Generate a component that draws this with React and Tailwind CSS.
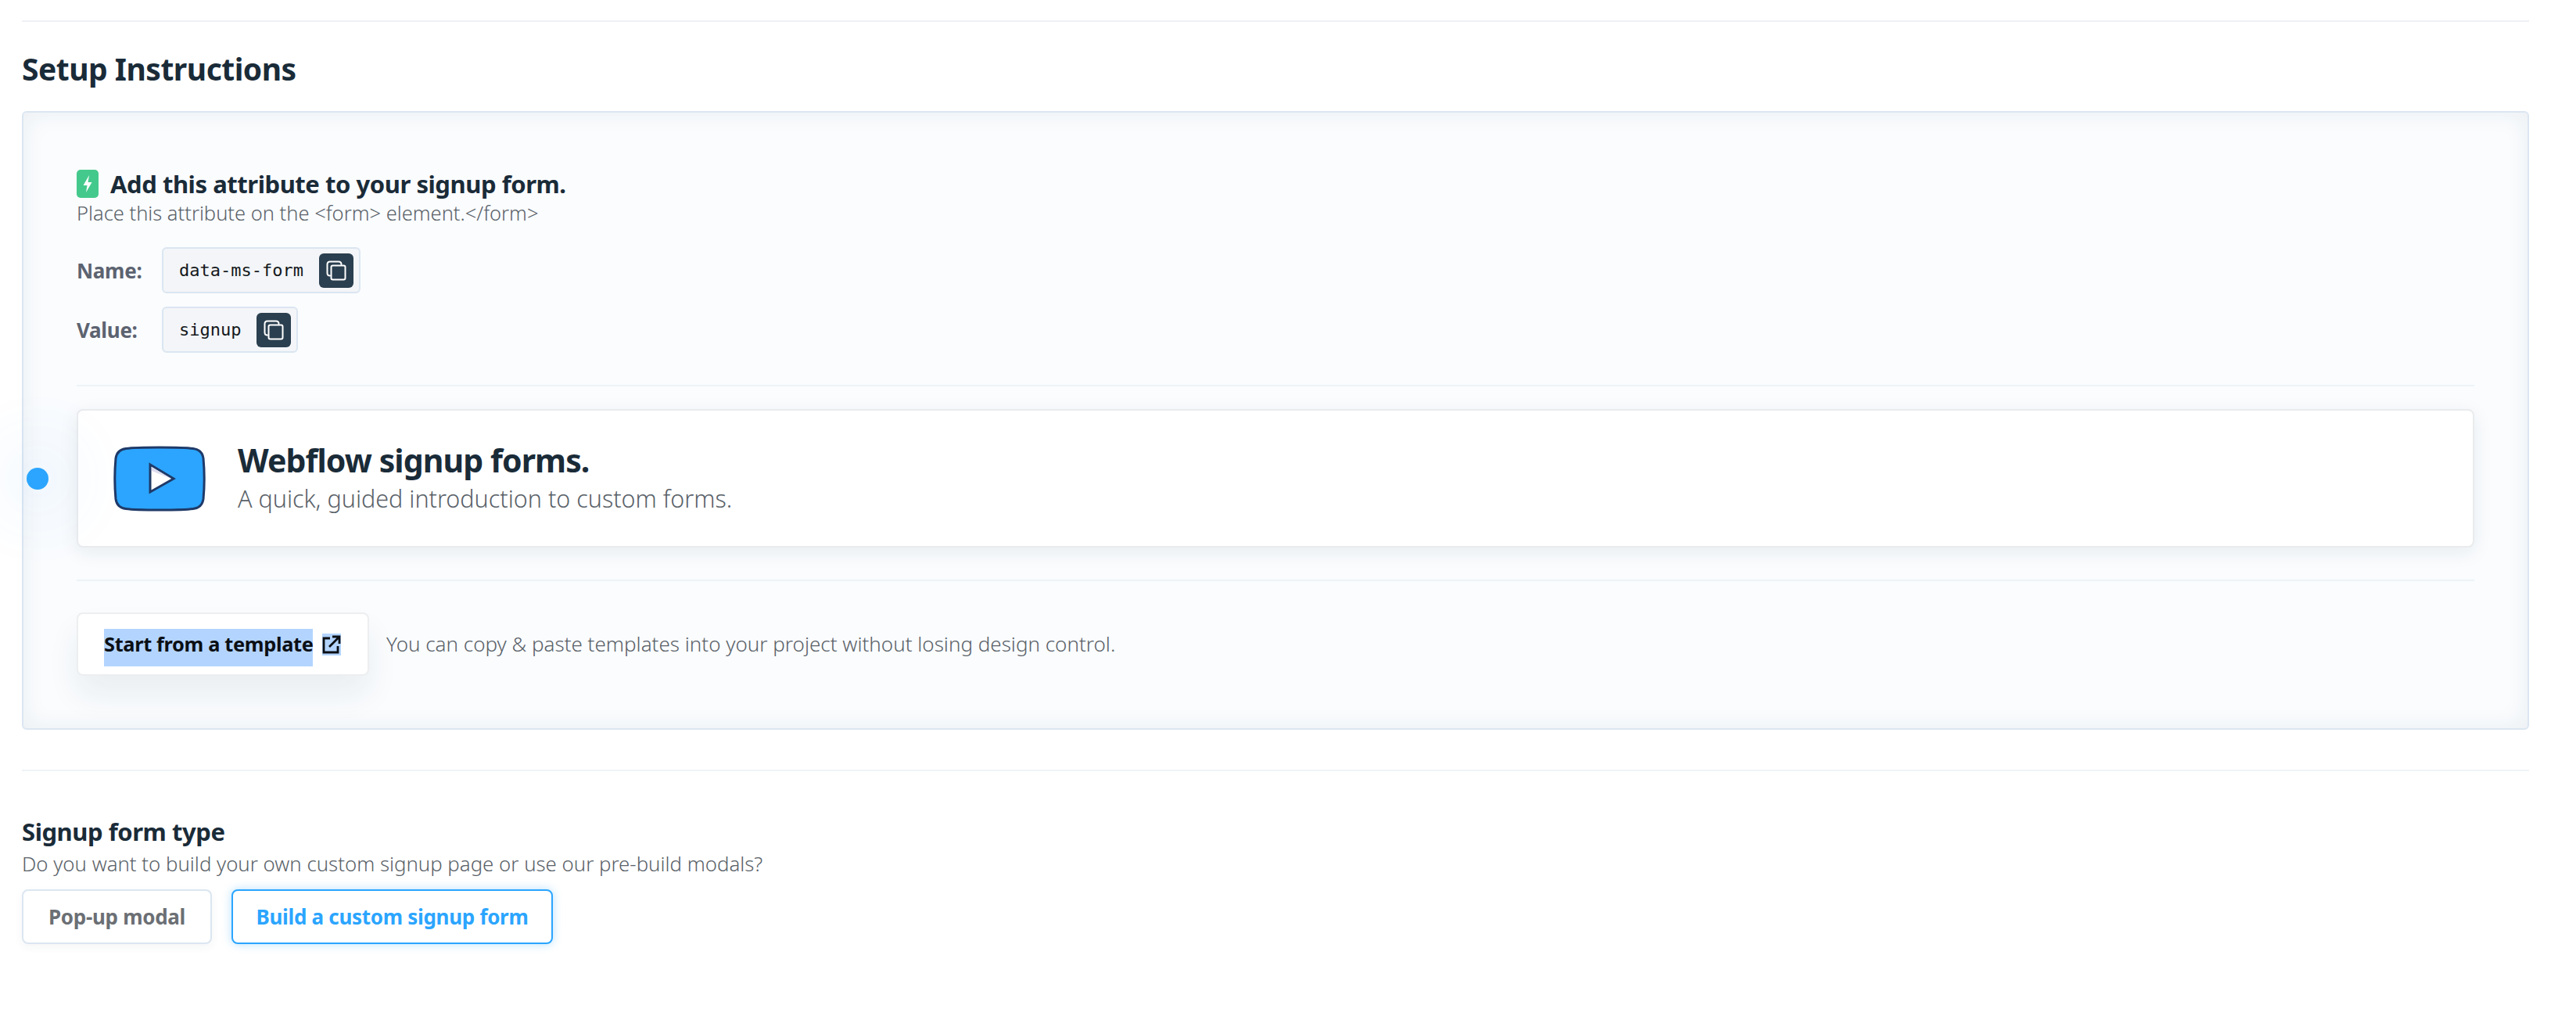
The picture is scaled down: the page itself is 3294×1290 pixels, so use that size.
import React from "react";

const sans = "font-['Noto_Sans',sans-serif]";

const CopyIcon = () => (
  <svg viewBox="0 0 26 26" className="w-[26px] h-[26px]" fill="none" stroke="white" strokeWidth="2">
    <path d="M5 19.500C2.800 19.500 1.500 18.200 1.500 16V5C1.500 2.800 2.800 1.500 5 1.500H16C18.200 1.500 19.500 2.800 19.500 5" strokeLinecap="round" />
    <rect x="6.500" y="6.500" width="18" height="18" rx="2" />
  </svg>
);

const AttributeRow = ({ label, value }) => (
  <div className="flex items-center">
    <span className="w-[109px] text-[26px] leading-none font-bold tracking-[-0.3px] text-[#5c6370]">{label}</span>
    <div className="flex items-center h-[59px] pl-[20px] pr-[7px] gap-[20px] bg-[#f3f5f8] border-2 border-[#dbe6f1] rounded-[6px]">
      <code className="font-['DejaVu_Sans_Mono',monospace] text-[22px] text-[#14181c]">{value}</code>
      <button className="flex items-center justify-center w-[44px] h-[44px] bg-[#2a3f4f] rounded-[6px]">
        <CopyIcon />
      </button>
    </div>
  </div>
);

const PlayLogo = () => (
  <svg viewBox="0 0 118 84" className="w-[118px] h-[84px] shrink-0">
    <path
      d="M59 2C74 2 91 2 102 3.500C110 4.500 114 9 115 16C116.500 32 116.500 52 115 68C114 75 110 79.500 102 80.500C91 82 74 82 59 82C44 82 27 82 16 80.500C8 79.500 4 75 3 68C1.500 52 1.500 32 3 16C4 9 8 4.500 16 3.500C27 2 44 2 59 2Z"
      fill="#2ba5ff"
      stroke="#1f3a68"
      strokeWidth="3"
    />
    <path d="M47 24L77 42L47 59Z" fill="white" stroke="#1f3a68" strokeWidth="3" strokeLinejoin="miter" />
    <path d="M49 27L74 42L49 32Z" fill="#dcdcee" />
  </svg>
);

export default function App() {
  return (
    <div className={`${sans} relative min-h-[1290px] bg-white pl-[28px] pr-[60px] pt-[26px] overflow-hidden`}>
      <div className="h-[2px] bg-[#eef0f7]" />
      <h2 className="mt-[38px] text-[39px] leading-[44px] font-bold tracking-[-0.5px] text-[#1a2b38]">Setup Instructions</h2>

      <div className="mt-[32px] h-[791px] px-[68px] pt-[72px] bg-[#fafcfe] border-2 border-[#dbe6f1] rounded-[6px] shadow-[inset_0_0_30px_rgba(30,50,70,0.07)]">
        <div className="flex items-center gap-[15px]">
          <div className="flex items-center justify-center w-[28px] h-[36px] bg-[#44c98c] rounded-[5px]">
            <svg viewBox="0 0 14 24" className="w-[14px] h-[24px]" fill="white">
              <path d="M9 1L1.500 14H6.500L5 23L12.500 10H7.500Z" />
            </svg>
          </div>
          <h3 className="text-[31px] leading-[38px] font-bold tracking-[-0.45px] text-[#1a2b38]">Add this attribute to your signup form.</h3>
        </div>
        <p className="mt-[3px] text-[25.5px] leading-[30px] font-light text-[#5a6269]">
          Place this attribute on the &lt;form&gt; element.&lt;/form&gt;
        </p>

        <div className="mt-[29px] flex flex-col gap-[17px]">
          <AttributeRow label="Name:" value="data-ms-form" />
          <AttributeRow label="Value:" value="signup" />
        </div>

        <div className="mt-[41px] h-[2px] bg-[#eef3f6]" />

        <div className="mt-[29px] h-[177px] flex items-center gap-[41px] pl-[45px] bg-white border-2 border-[#e9ebed] rounded-[8px] shadow-[0_6px_24px_rgba(30,50,70,0.08)]">
          <PlayLogo />
          <div className="-mt-[4px]">
            <h3 className="text-[41px] leading-[50px] font-bold tracking-[-0.9px] text-[#1a2b38]">Webflow signup forms.</h3>
            <p className="mt-[5px] text-[30.5px] leading-[38px] font-light text-[#5a6269]">A quick, guided introduction to custom forms.</p>
          </div>
        </div>

        <div className="mt-[41px] h-[2px] bg-[#eef3f6]" />

        <div className="mt-[40px] flex items-center gap-[22px]">
          <button className="flex items-start h-[81px] w-[374px] pl-[33px] bg-white border-2 border-[#eceef0] rounded-[8px] shadow-[0_24px_40px_rgba(30,50,70,0.07)]">
            <span className="mt-[19px] h-[48px] leading-[38px] bg-[#b3d4ff] text-[25.4px] font-bold tracking-[-0.35px] text-[#0b0f14]">Start from a template</span>
            <span className="mt-[25px] ml-[12px] bg-[#b3d4ff] h-[28px] flex items-center">
              <svg viewBox="0 0 24 24" className="w-[24px] h-[24px]" fill="none" stroke="#0b0f14" strokeWidth="2.800">
                <path d="M10 4H2V22H20V14" />
                <path d="M9 15L22 2M13 2H22V11" />
              </svg>
            </span>
          </button>
          <p className="text-[26px] font-light text-[#5a6269]">You can copy &amp; paste templates into your project without losing design control.</p>
        </div>
      </div>

      <div className="mt-[51px] h-[2px] bg-[#eef3f6]" />

      <h3 className="mt-[58px] text-[31px] leading-[38px] font-bold tracking-[-0.45px] text-[#1a2b38]">Signup form type</h3>
      <p className="mt-[6px] text-[25.8px] leading-[32px] font-light text-[#5a6269]">Do you want to build your own custom signup page or use our pre-build modals?</p>

      <div className="mt-[17px] flex gap-[25px]">
        <button className="w-[243px] h-[70px] bg-white border-2 border-[#dbe6f1] rounded-[8px] text-[26px] font-bold tracking-[-0.3px] text-[#6b6f74] shadow-[0_4px_12px_rgba(30,50,70,0.05)]">Pop-up modal</button>
        <button className="w-[411px] h-[70px] bg-white border-2 border-[#2ba5ff] rounded-[8px] text-[26px] font-bold tracking-[-0.3px] text-[#2ba5ff] shadow-[0_0_12px_rgba(43,165,255,0.35)]">Build a custom signup form</button>
      </div>

      <div className="absolute left-[34px] top-[598px] w-[28px] h-[28px] rounded-full bg-[#2ba5ff] shadow-[0_0_70px_50px_rgba(43,165,255,0.04)]" />
    </div>
  );
}
